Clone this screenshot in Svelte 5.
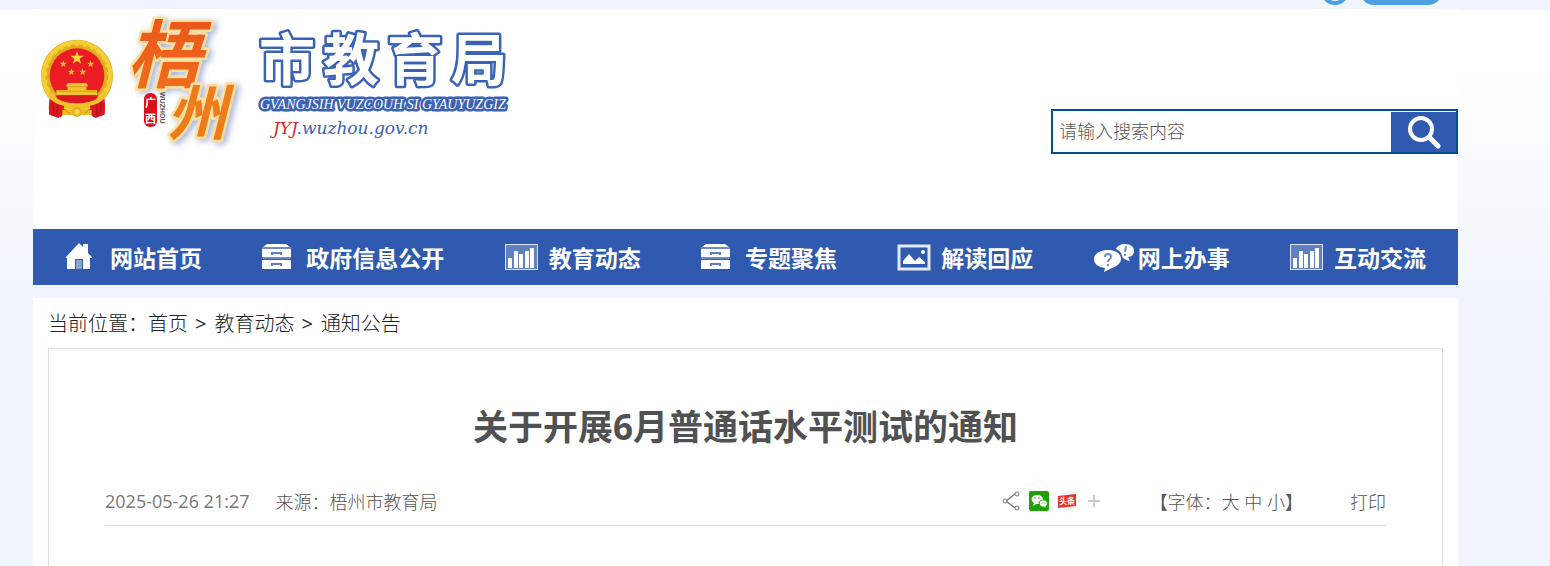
<script>
  let keyword = '';
  let fontSize = 'mid';

  const menu = [
    { label: '网站首页', icon: 'home' },
    { label: '政府信息公开', icon: 'drawer' },
    { label: '教育动态', icon: 'chart' },
    { label: '专题聚焦', icon: 'drawer' },
    { label: '解读回应', icon: 'picture' },
    { label: '网上办事', icon: 'chat' },
    { label: '互动交流', icon: 'chart' }
  ];

  const crumbs = ['首页', '教育动态', '通知公告'];

  const sizes = [
    { id: 'big', label: '大' },
    { id: 'mid', label: '中' },
    { id: 'small', label: '小' }
  ];

  const article = {
    title: '关于开展6月普通话水平测试的通知',
    date: '2025-05-26 21:27',
    source: '梧州市教育局'
  };

  function star(cx, cy, r) {
    let points = [];
    for (let i = 0; i < 10; i++) {
      const a = -Math.PI / 2 + (i * Math.PI) / 5;
      const d = i % 2 ? r * 0.4 : r;
      points.push(`${(cx + d * Math.cos(a)).toFixed(1)},${(cy + d * Math.sin(a)).toFixed(1)}`);
    }
    return points.join(' ');
  }
</script>

<div class="page">
  <div class="topbar">
    <a href="#user" class="round" aria-label="user"></a>
    <a href="#more" class="pill" aria-label="more"></a>
  </div>

  <header>
    <a href="#home" class="logo">
      <svg width="480" height="140" viewBox="0 0 480 140">
        <defs>
          <linearGradient id="orange" x1="0" y1="0" x2="0" y2="1">
            <stop offset="0" stop-color="#e9501c" />
            <stop offset="1" stop-color="#f0701c" />
          </linearGradient>
          <linearGradient id="amber" x1="0" y1="0" x2="0" y2="1">
            <stop offset="0" stop-color="#ef7a22" />
            <stop offset="1" stop-color="#ec7d16" />
          </linearGradient>
          <filter id="glow" x="-20%" y="-20%" width="150%" height="150%">
            <feDropShadow dx="3" dy="2" stdDeviation="3" flood-color="#7f93c8" flood-opacity="0.7" />
          </filter>
        </defs>

        <!-- emblem -->
        <g transform="translate(8 32) scale(0.3333)">
          <path d="M30 160 Q20 190 25 221 L52 231 L72 218 L144 218 L164 231 L190 221 Q196 190 186 160 Z" fill="#d81420" />
          <circle cx="108" cy="104" r="94" fill="none" stroke="#e0aa1f" stroke-width="28" />
          <circle cx="108" cy="104" r="98" fill="none" stroke="#f5cf32" stroke-width="16" />
          <circle cx="108" cy="104" r="92" fill="none" stroke="#d9a21f" stroke-width="3" stroke-dasharray="14 9" />
          <circle cx="108" cy="104" r="82" fill="#eb1c24" />
          <polygon points={star(108, 51, 21)} fill="#ffd83c" />
          <polygon points={star(67, 69, 11)} fill="#f7c52c" />
          <polygon points={star(149, 69, 11)} fill="#f7c52c" />
          <polygon points={star(91, 93, 11)} fill="#f7c52c" />
          <polygon points={star(125, 93, 11)} fill="#f7c52c" />
          <path d="M80 126 H136 L142 134 H136 V147 H168 V163 H46 V147 H80 V134 H74 Z" fill="#f4c42c" />
          <path d="M76 137 H140 M50 151 H166" stroke="#d59c1c" stroke-width="3" />
          <path d="M44 163 H172 L160 188 Q108 198 56 188 Z" fill="#dc1822" />
          <path d="M22 150 Q45 177 70 182 Q108 191 146 182 Q171 177 194 150 L190 176 Q160 203 108 205 Q56 203 26 176 Z" fill="#f1c12b" />
          <path d="M26 173 Q42 189 70 194 L60 229 L25 220 Z M190 173 Q174 189 146 194 L156 229 L191 220 Z" fill="#dd1521" />
          <path d="M35 182 L39 221 M49 190 L48 224 M181 182 L177 221 M167 190 L168 224" stroke="#a9101a" stroke-width="3" />
          <path d="M64 207 H152 V222 H64 Z" fill="#efbd27" />
          <circle cx="108" cy="213" r="15" fill="#e2b022" />
          <circle cx="108" cy="213" r="8" fill="#f7d64b" />
          <path d="M75 208 L86 220 M130 220 L141 208" stroke="#c48a15" stroke-width="3" />
        </g>

        <g class="brush" filter="url(#glow)">
          <text x="94" y="73" font-size="74" fill="url(#orange)">梧</text>
          <text x="134" y="126" font-size="60" fill="url(#amber)">州</text>
        </g>
        <rect x="111" y="84" width="13" height="34" rx="6" fill="#d9101a" />
        <text class="seal" x="112" y="98">广</text>
        <text class="seal" x="112" y="114">西</text>
        <text class="side" transform="translate(127 83) rotate(90)">WUZHOU</text>

        <text class="bureau" x="226 290 354 418" y="71">市教育局</text>
        <text class="zhuang" x="227" y="100">GVANGJSIH VUZCOUH SI GYAUYUZGIZ</text>
        <text class="domain" x="240" y="125"><tspan fill="#dc2430">JYJ</tspan>.wuzhou.gov.cn</text>
      </svg>
    </a>

    <form class="search" on:submit|preventDefault>
      <input type="text" aria-label="搜索" placeholder="请输入搜索内容" bind:value={keyword} />
      <button type="submit" aria-label="搜索">
        <svg width="34" height="34" viewBox="0 0 34 34" fill="none" stroke="#fff">
          <circle cx="14" cy="14" r="11" stroke-width="4" />
          <path d="M22 22 L31 31" stroke-width="5" stroke-linecap="round" />
        </svg>
      </button>
    </form>
  </header>

  <nav>
    {#each menu as item}
      <a href="#{item.icon}">
        <span class="icon">
          {#if item.icon === 'home'}
            <svg width="27" height="28" viewBox="0 0 27 28">
              <path d="M0 14 L13 0 L17 4 V1 H22 V10 L26 14 V15 H24 V26 H17 V16 H9 V26 H1 V15 H0 Z" fill="#fff" />
              <path d="M10 17 H16 V26 H10 Z" fill="#8ba4d4" />
            </svg>
          {:else if item.icon === 'drawer'}
            <svg width="30" height="28" viewBox="0 0 30 28">
              <path d="M5 1 H24 L28 4 H1 Z M0 6 H29 V14 H0 Z M0 17 H29 V26 H0 Z" fill="#fff" />
              <path d="M0 5 H29 M0 15 H29" stroke="#a9bbe0" />
              <path d="M10 12 V10 H19 V12 M10 23 V21 H19 V23" fill="none" stroke="#5f7fc1" stroke-width="2" />
            </svg>
          {:else if item.icon === 'chart'}
            <svg width="33" height="28" viewBox="0 0 33 28">
              <rect x="0.5" y="1.5" width="32" height="25" fill="#5f80c2" stroke="#dbe3f3" />
              <path d="M5 25 V15 M11 25 V8 M16 25 V11 M22 25 V8 M27 25 V5" stroke="#fff" stroke-width="4" />
            </svg>
          {:else if item.icon === 'picture'}
            <svg width="34" height="28" viewBox="0 0 34 28">
              <rect x="2" y="3" width="30" height="23" fill="none" stroke="#e3e9f5" stroke-width="3" />
              <path d="M6 21 V18 L12 11 L18 18 L22 14 L28 19 V21 Z" fill="#fff" />
              <circle cx="26" cy="9" r="2" fill="#fff" />
            </svg>
          {:else}
            <svg width="41" height="30" viewBox="0 0 41 30">
              <path d="M14 8 C22 8 27 12 27 17 C27 22 21 25 18 26 L10 30 L11 26 C4 25 0 22 0 17 C0 12 6 8 14 8 Z" fill="#fff" />
              <path d="M31 2 C37 2 40 5 40 9 C40 13 37 15 34 15 L36 19 C32 18 29 17 28 14 C27 10 25 8 22 7 C23 4 27 2 31 2 Z" fill="#fff" />
              <path d="M11 15 C11 11 17 11 17 15 C17 17 14 17 14 20 M14 22 V24 M32 4 L31 10 M31 12 V14" fill="none" stroke="#6d8bc8" stroke-width="2" />
            </svg>
          {/if}
        </span>
        {item.label}
      </a>
    {/each}
  </nav>

  <main>
    <div class="crumbs">
      当前位置：{#each crumbs as crumb, i}{#if i > 0}<span class="arrow">&gt;</span>{/if}<a href="#{crumb}">{crumb}</a>{/each}
    </div>

    <article>
      <h1>{article.title}</h1>
      <div class="meta">
        <span class="date">{article.date}</span>
        <span>来源：{article.source}</span>
        <div class="share">
          <button aria-label="分享">
            <svg width="20" height="20" viewBox="0 0 20 20" fill="none" stroke="#777">
              <path d="M14 3 L5 10 L14 17" stroke-width="1.5" />
              <circle cx="16" cy="3" r="2" fill="#fff" />
              <circle cx="4" cy="10" r="2" fill="#fff" />
              <circle cx="16" cy="17" r="2" fill="#fff" />
            </svg>
          </button>
          <button aria-label="微信">
            <svg width="20" height="20" viewBox="0 0 20 20">
              <rect width="20" height="20" rx="2" fill="#1ea305" />
              <path d="M8 4 C12 4 14 6 14 9 C11 9 9 11 10 13 L7 13 L4 15 L5 12 C1 10 2 4 8 4 Z" fill="#fff" />
              <path d="M14 9 C19 9 19 14 17 15 L17 17 L15 16 C9 16 9 9 14 9 Z" fill="#fff" stroke="#1ea305" stroke-width="0.7" />
              <circle cx="6" cy="7" r="0.8" fill="#1ea305" />
              <circle cx="10" cy="7" r="0.8" fill="#1ea305" />
              <circle cx="13" cy="12" r="0.6" fill="#1ea305" />
              <circle cx="16" cy="12" r="0.6" fill="#1ea305" />
            </svg>
          </button>
          <button aria-label="头条">
            <svg width="20" height="20" viewBox="0 0 20 20">
              <circle cx="10" cy="10" r="10" fill="#f6f6f6" />
              <path d="M1 5 L19 3 V15 L1 17 Z" fill="#e6332c" />
              <text class="toutiao" x="2" y="13">头条</text>
            </svg>
          </button>
          <button aria-label="更多">
            <svg width="20" height="20" viewBox="0 0 20 20">
              <path d="M9 4 V16 M3 10 H15" stroke="#ccc" stroke-width="2" />
            </svg>
          </button>
        </div>
        <div class="sizes">
          【字体：{#each sizes as size, i}{#if i > 0}{' '}{/if}<button on:click={() => fontSize = size.id}>{size.label}</button>{/each}】
        </div>
        <button on:click={() => window.print()}>打印</button>
      </div>
    </article>
  </main>
</div>

<style>
  :global(body) {
    background: #f0f5fd;
    font-family: "Open Sans", "Noto Sans CJK SC", sans-serif;
  }

  .page {
    box-sizing: border-box;
    min-height: 100vh;
    padding: 0 92px 0 33px;
    display: flex;
    flex-direction: column;
    background: linear-gradient(#f0f5fd 10px, #fff 10px, #fff 60px, #f0f5fd 300px);
  }

  a {
    color: inherit;
    text-decoration: none;
  }

  button {
    padding: 0;
    border: none;
    background: none;
    color: inherit;
    font: inherit;
    cursor: pointer;
  }

  svg {
    display: block;
  }

  .topbar {
    box-sizing: border-box;
    height: 9px;
    padding: 0 16px 4px 0;
    display: flex;
    justify-content: flex-end;
    align-items: flex-end;
    gap: 11px;
    overflow: hidden;
  }

  .round {
    box-sizing: border-box;
    width: 28px;
    height: 28px;
    border: 4px solid #4c9fe2;
    border-radius: 50%;
  }

  .pill {
    width: 82px;
    height: 28px;
    border-radius: 14px;
    background: #4c9fe2;
  }

  header {
    height: 220px;
    display: flex;
    justify-content: space-between;
    align-items: flex-start;
    background: #fff;
  }

  .logo svg {
    overflow: visible;
  }

  .brush {
    font-family: "Noto Sans CJK SC", sans-serif;
    font-weight: bold;
    font-style: italic;
    stroke: #fde0a0;
    stroke-width: 5px;
    stroke-linejoin: round;
    paint-order: stroke;
  }

  .seal {
    font-family: "Noto Sans CJK SC", sans-serif;
    font-size: 11px;
    font-weight: bold;
    fill: #fff;
  }

  .side {
    font-family: "Liberation Sans", sans-serif;
    font-size: 7px;
    font-weight: bold;
    fill: #555;
  }

  .bureau {
    font-family: "Noto Sans CJK SC", sans-serif;
    font-size: 56px;
    font-weight: bold;
    fill: #fff;
    stroke: #3a63b5;
    stroke-width: 5px;
    stroke-linejoin: round;
    paint-order: stroke;
  }

  .zhuang {
    font-family: "Liberation Serif", serif;
    font-size: 14px;
    font-style: italic;
    fill: #fff;
    stroke: #3a63b5;
    stroke-width: 5px;
    stroke-linejoin: round;
    paint-order: stroke;
  }

  .domain {
    font-family: "DejaVu Serif", serif;
    font-size: 17px;
    font-style: italic;
    fill: #3a63b5;
  }

  .search {
    box-sizing: border-box;
    width: 407px;
    height: 45px;
    margin-top: 100px;
    display: flex;
    border: 2px solid #00508f;
  }

  .search input {
    flex: 1;
    min-width: 0;
    padding: 0 6px 2px;
    border: none;
    outline: none;
    background: #fff;
    font: 300 18px "Open Sans", "Noto Sans CJK SC", sans-serif;
  }

  .search input::placeholder {
    color: #555;
  }

  .search button {
    width: 65px;
    margin-top: 1px;
    display: flex;
    justify-content: center;
    align-items: center;
    background: #2f5aaf;
  }

  nav {
    height: 56px;
    padding: 0 32px 0 33px;
    display: flex;
    justify-content: space-between;
    align-items: center;
    background: #2f5aaf;
    color: #fff;
    font-size: 23px;
    font-weight: bold;
    white-space: nowrap;
  }

  nav a {
    display: flex;
    align-items: center;
  }

  .icon {
    width: 44px;
  }

  main {
    flex: 1;
    margin-top: 13px;
    padding: 0 15px;
    display: flex;
    flex-direction: column;
    background: #fff;
  }

  .crumbs {
    padding-top: 2px;
    color: #222;
    font-size: 20px;
    font-weight: 300;
    line-height: 48px;
  }

  .arrow {
    margin: 0 8px 0 7px;
    font-weight: 400;
  }

  article {
    flex: 1;
    padding: 0 56px;
    border: 1px solid #ddd;
    border-bottom: none;
  }

  h1 {
    margin: 50px 0 0;
    color: #4f5152;
    font-size: 35px;
    line-height: 56px;
    text-align: center;
  }

  .meta {
    height: 48px;
    margin-top: 22px;
    display: flex;
    align-items: center;
    border-bottom: 1px solid #ddd;
    color: #555;
    font-size: 18px;
    font-weight: 300;
    white-space: nowrap;
  }

  .date {
    margin-right: 26px;
    color: #777;
    font-weight: 400;
  }

  .share {
    margin-left: auto;
    display: flex;
    gap: 8px;
  }

  .sizes {
    margin: 0 47px 0 45px;
  }

  .toutiao {
    font-family: "Noto Sans CJK SC", sans-serif;
    font-size: 8px;
    font-weight: bold;
    fill: #fff;
  }
</style>
